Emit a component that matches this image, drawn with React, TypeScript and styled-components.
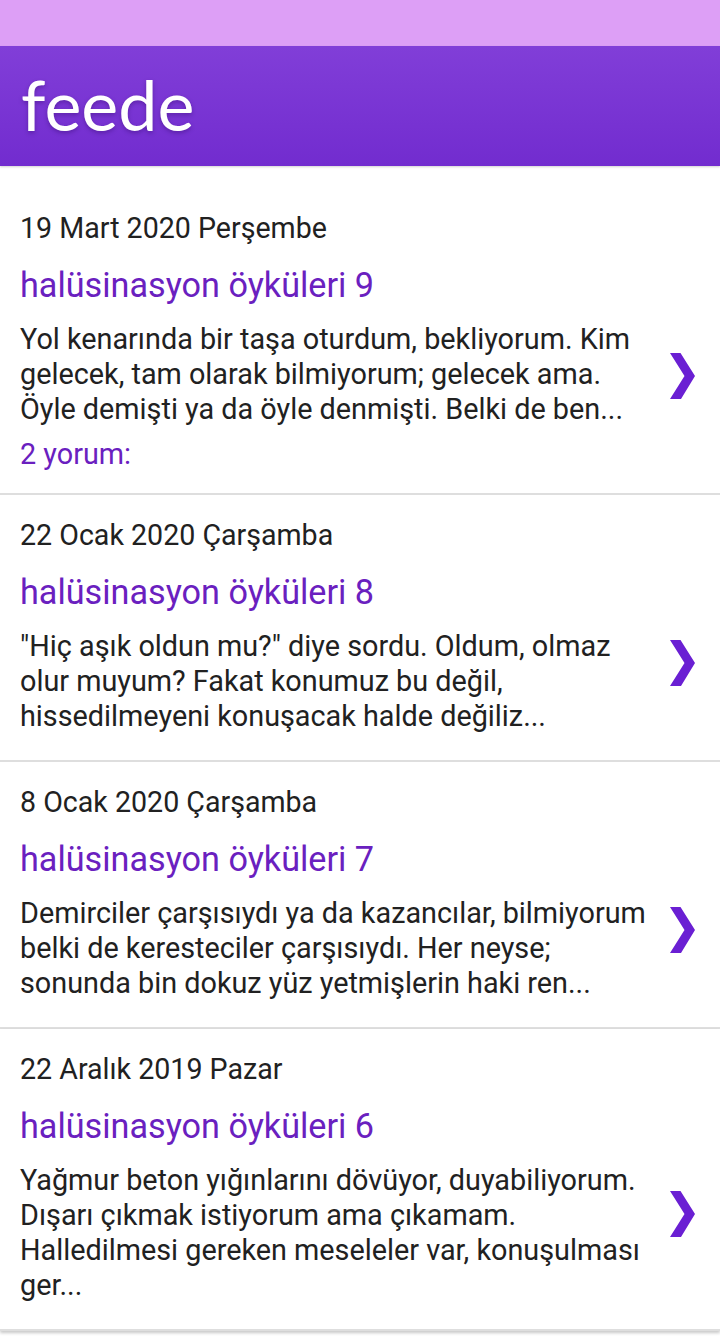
import React from "react";
import styled, { createGlobalStyle } from "styled-components";

const GlobalStyle = createGlobalStyle`
  html, body {
    margin: 0;
    padding: 0;
    background: #ffffff;
  }
  body {
    font-family: Roboto, "Noto Sans", "Liberation Sans", sans-serif;
    color: #212121;
  }
`;

const Page = styled.div`
  width: 720px;
  min-height: 1341px;
  background: #ffffff;
  overflow: hidden;
`;

const StatusBar = styled.div`
  height: 46px;
  background: #dd9ff6;
`;

const Header = styled.header`
  height: 120px;
  background: linear-gradient(180deg, #813ed8 0%, #722ccf 100%);
  display: flex;
  align-items: center;
  padding-left: 21px;
  box-shadow: 0 1px 2px rgba(0, 0, 0, 0.18);
  position: relative;
  z-index: 1;
`;

const Logo = styled.h1`
  margin: 0;
  font-family: Lato, "Open Sans", sans-serif;
  font-weight: 400;
  font-size: 70px;
  line-height: 1;
  color: #ffffff;
  text-shadow: 0 2px 4px rgba(40, 0, 90, 0.35);
  transform: translateY(-2px);
`;

const List = styled.main`
  padding-top: 22px;
  display: flex;
  flex-direction: column;
`;

const Item = styled.article<{ $last?: boolean }>`
  padding: 23px 25px 26px 20px;
  border-bottom: 2px solid #dedede;
  ${(p) => (p.$last ? "box-shadow: 0 2px 3px rgba(0,0,0,0.22);" : "")}
`;

const DateLine = styled.div`
  font-size: 28.6px;
  line-height: 34px;
  color: #212121;
  margin-bottom: 20px;
  white-space: nowrap;
`;

const Title = styled.h2`
  margin: 0 0 17px 0;
  font-weight: 400;
  font-size: 34.2px;
  line-height: 40px;
  color: #6a20bf;
  white-space: nowrap;
`;

const Row = styled.div`
  display: flex;
  align-items: center;
`;

const Content = styled.div`
  flex: 1;
  min-width: 0;
`;

const Line = styled.span`
  display: block;
  font-size: 28.8px;
  line-height: 35px;
  color: #212121;
  white-space: nowrap;
`;

const Comments = styled.div`
  margin-top: 10px;
  margin-bottom: -5px;
  font-size: 28.8px;
  line-height: 35px;
  color: #6a20bf;
`;

const ChevronWrap = styled.div`
  flex: none;
  width: 25px;
  height: 46px;
  transform: translateY(-19px);
`;

const Chevron = () => (
  <ChevronWrap>
    <svg width="25" height="46" viewBox="0 0 25 46" aria-hidden="true">
      <path d="M0 0 H10.5 L25 23 L11 46 H0 L14.5 23 Z" fill="#6a1fd3" />
    </svg>
  </ChevronWrap>
);

type Post = {
  date: string;
  title: string;
  lines: string[];
  comments?: string;
};

const posts: Post[] = [
  {
    date: "19 Mart 2020 Perşembe",
    title: "halüsinasyon öyküleri 9",
    lines: [
      "Yol kenarında bir taşa oturdum, bekliyorum. Kim",
      "gelecek, tam olarak bilmiyorum; gelecek ama.",
      "Öyle demişti ya da öyle denmişti. Belki de ben...",
    ],
    comments: "2 yorum:",
  },
  {
    date: "22 Ocak 2020 Çarşamba",
    title: "halüsinasyon öyküleri 8",
    lines: [
      "\"Hiç aşık oldun mu?\" diye sordu. Oldum, olmaz",
      "olur muyum? Fakat konumuz bu değil,",
      "hissedilmeyeni konuşacak halde değiliz...",
    ],
  },
  {
    date: "8 Ocak 2020 Çarşamba",
    title: "halüsinasyon öyküleri 7",
    lines: [
      "Demirciler çarşısıydı ya da kazancılar, bilmiyorum",
      "belki de keresteciler çarşısıydı. Her neyse;",
      "sonunda bin dokuz yüz yetmişlerin haki ren...",
    ],
  },
  {
    date: "22 Aralık 2019 Pazar",
    title: "halüsinasyon öyküleri 6",
    lines: [
      "Yağmur beton yığınlarını dövüyor, duyabiliyorum.",
      "Dışarı çıkmak istiyorum ama çıkamam.",
      "Halledilmesi gereken meseleler var, konuşulması",
      "ger...",
    ],
  },
];

export default function App() {
  return (
    <>
      <GlobalStyle />
      <Page>
        <StatusBar />
        <Header>
          <Logo>feede</Logo>
        </Header>
        <List>
          {posts.map((p, i) => (
            <Item key={p.title} $last={i === posts.length - 1}>
              <DateLine>{p.date}</DateLine>
              <Title>{p.title}</Title>
              <Row>
                <Content>
                  {p.lines.map((l) => (
                    <Line key={l}>{l}</Line>
                  ))}
                  {p.comments && <Comments>{p.comments}</Comments>}
                </Content>
                <Chevron />
              </Row>
            </Item>
          ))}
        </List>
      </Page>
    </>
  );
}
